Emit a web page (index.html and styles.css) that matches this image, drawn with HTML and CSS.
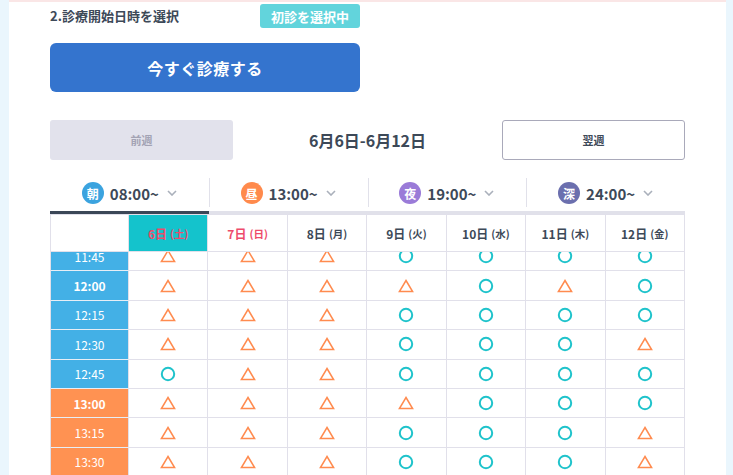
FILE: index.html
```html
<!DOCTYPE html>
<html lang="ja">
<head>
    <meta charset="UTF-8">
    <meta name="viewport" content="width=device-width, initial-scale=1.0">
    <title>診療予約</title>
    <link rel="stylesheet" href="styles.css">
</head>
<body>

<div class="page">
    <div class="side"></div>

    <main class="panel">
        <!-- step title -->
        <div class="step-head">
            <h2 class="step-title">2.診療開始日時を選択</h2>
            <span class="badge">初診を選択中</span>
        </div>

        <button class="now-btn">今すぐ診療する</button>

        <!-- week switcher -->
        <div class="week-nav">
            <button class="week-btn prev">前週</button>
            <div class="week-range">6月6日-6月12日</div>
            <button class="week-btn next">翌週</button>
        </div>

        <!-- time of day tabs -->
        <div class="tabs">
            <div class="tab active">
                <span class="tab-icon morning">朝</span>
                <span class="tab-time">08:00~</span>
                <svg class="chev" width="10" height="6" viewBox="0 0 10 6"><polyline points="1,1 5,5 9,1" fill="none" stroke="#aab0bb" stroke-width="1.6"/></svg>
            </div>
            <div class="tab">
                <span class="tab-icon noon">昼</span>
                <span class="tab-time">13:00~</span>
                <svg class="chev" width="10" height="6" viewBox="0 0 10 6"><polyline points="1,1 5,5 9,1" fill="none" stroke="#aab0bb" stroke-width="1.6"/></svg>
            </div>
            <div class="tab">
                <span class="tab-icon night">夜</span>
                <span class="tab-time">19:00~</span>
                <svg class="chev" width="10" height="6" viewBox="0 0 10 6"><polyline points="1,1 5,5 9,1" fill="none" stroke="#aab0bb" stroke-width="1.6"/></svg>
            </div>
            <div class="tab">
                <span class="tab-icon late">深</span>
                <span class="tab-time">24:00~</span>
                <svg class="chev" width="10" height="6" viewBox="0 0 10 6"><polyline points="1,1 5,5 9,1" fill="none" stroke="#aab0bb" stroke-width="1.6"/></svg>
            </div>
        </div>

        <!-- schedule grid -->
        <div class="schedule">
            <div class="grid-row head-row">
                <div class="cell corner"></div>
                <div class="cell day holiday selected">6日 <small>(土)</small></div>
                <div class="cell day holiday">7日 <small>(日)</small></div>
                <div class="cell day">8日 <small>(月)</small></div>
                <div class="cell day">9日 <small>(火)</small></div>
                <div class="cell day">10日 <small>(水)</small></div>
                <div class="cell day">11日 <small>(木)</small></div>
                <div class="cell day">12日 <small>(金)</small></div>
            </div>
            <div class="slots">
                <div class="slots-inner" id="slots"></div>
            </div>
        </div>
    </main>

    <div class="side"></div>
</div>

<script>
    // t = triangle (few left), o = circle (available)
    const rows = [
        ['11:45', 'am', 'tttoooo'],
        ['12:00', 'am', 'ttttoto'],
        ['12:15', 'am', 'tttoooo'],
        ['12:30', 'am', 'tttooot'],
        ['12:45', 'am', 'ottoooo'],
        ['13:00', 'pm', 'ttttooo'],
        ['13:15', 'pm', 'tttooot'],
        ['13:30', 'pm', 'tttooot']
    ];

    const tri = '<svg width="16" height="14" viewBox="0 0 16 14"><polygon points="8,1.5 14.6,12.6 1.4,12.6" fill="none" stroke="#ff8b4f" stroke-width="1.5" stroke-linejoin="miter"/></svg>';
    const circ = '<svg width="16" height="16" viewBox="0 0 16 16"><circle cx="8" cy="8" r="6.2" fill="none" stroke="#1fc3cb" stroke-width="2"/></svg>';

    const slots = document.getElementById('slots');
    rows.forEach(row => {
        const [time, part, marks] = row;
        const hour = time.endsWith(':00') ? ' hour' : '';
        let html = `<div class="cell time ${part}${hour}">${time}</div>`;
        for (const m of marks) {
            html += `<div class="cell mark">${m === 't' ? tri : circ}</div>`;
        }
        const div = document.createElement('div');
        div.className = 'grid-row';
        div.innerHTML = html;
        slots.appendChild(div);
    });
</script>

</body>
</html>
```

FILE: styles.css
```css
* {
    margin: 0;
    padding: 0;
    box-sizing: border-box;
}

html, body {
    height: 100%;
    overflow: hidden;
    font-family: "Noto Sans CJK JP", "Noto Sans", sans-serif;
    color: #3d4958;
    background: #fff;
}

button {
    font-family: inherit;
    cursor: pointer;
}

.page {
    display: flex;
    height: 100vh;
}

/* light blue side strips */
.side {
    width: 9px;
    background-color: #eaf6fd;
}
.side:last-child {
    width: 7px;
}

.panel {
    flex: 1;
    border-top: 2px solid #fae6e6;
    padding: 2px 0 0 41px;
}

/* step header */
.step-head {
    width: 310px;
    height: 24px;
    display: flex;
    align-items: center;
    justify-content: space-between;
}

.step-title {
    font-size: 13px;
    font-weight: 700;
    margin-top: -2px;
}

.badge {
    width: 100px;
    height: 24px;
    border-radius: 3px;
    background-color: #62d4dc;
    color: #fff;
    font-size: 13px;
    font-weight: 700;
    display: flex;
    align-items: center;
    justify-content: center;
}

.now-btn {
    display: block;
    width: 310px;
    height: 49px;
    margin-top: 15px;
    border: none;
    border-radius: 6px;
    background-color: #3474ce;
    color: #fff;
    font-size: 16px;
    font-weight: 700;
    letter-spacing: 0.5px;
}

/* week navigation */
.week-nav {
    width: 635px;
    height: 40px;
    margin-top: 28px;
    display: flex;
    align-items: center;
    justify-content: space-between;
}

.week-btn {
    width: 183px;
    height: 40px;
    border-radius: 3px;
    font-size: 11px;
    font-weight: 700;
}
.week-btn.prev {
    background-color: #e2e2ec;
    border: none;
    color: #a3a3b4;
}
.week-btn.next {
    background-color: #fff;
    border: 1px solid #a9a9ba;
    color: #3d4958;
}

.week-range {
    font-size: 16px;
    font-weight: 700;
}

/* tabs */
.tabs {
    width: 635px;
    margin-top: 15px;
    display: flex;
}

.tab {
    flex: 1;
    height: 39px;
    border-bottom: 3px solid #e1e1ea;
    display: flex;
    align-items: center;
    justify-content: center;
    gap: 6px;
    position: relative;
}
.tab.active {
    border-bottom-color: #3b4757;
}
.tab + .tab::before {
    content: "";
    position: absolute;
    left: 0;
    top: 3px;
    height: 29px;
    width: 1px;
    background-color: #e1e1ea;
}

.tab-icon {
    width: 22px;
    height: 22px;
    border-radius: 50%;
    color: #fff;
    font-size: 12px;
    font-weight: 700;
    display: flex;
    align-items: center;
    justify-content: center;
}
.morning { background-color: #3ba3df; }
.noon { background-color: #ff8a4c; }
.night { background-color: #9a7bd8; }
.late { background-color: #6b6fae; }

.tab-time {
    font-size: 15px;
    font-weight: 700;
}

.chev {
    margin-left: 2px;
}

/* schedule grid */
.schedule {
    width: 635px;
    border-left: 1px solid #e1e0ea;
}

.grid-row {
    display: grid;
    grid-template-columns: 78px repeat(7, 1fr);
}

.head-row {
    border-top: 1px solid #e1e0ea;
}

.cell {
    border-right: 1px solid #e1e0ea;
    border-bottom: 1px solid #e1e0ea;
    display: flex;
    align-items: center;
    justify-content: center;
}

.head-row .cell {
    height: 37px;
}

.day {
    font-size: 12px;
    font-weight: 700;
    gap: 3px;
}
.day small {
    font-size: 10.5px;
}
.day.holiday {
    color: #ee4b6b;
}
.day.selected {
    background-color: #14c3cc;
}

.slots {
    height: 240px;
    overflow: hidden;
}
.slots-inner {
    margin-top: -10px;
}

.slots .cell {
    height: 29.4px;
}

.time {
    color: #fff;
    font-size: 12px;
    border-bottom-color: #e7eef6;
}
.time.am { background-color: #43b0e6; }
.time.pm { background-color: #ff9252; }
.time.hour { font-weight: 700; }

.mark svg {
    display: block;
}
```
